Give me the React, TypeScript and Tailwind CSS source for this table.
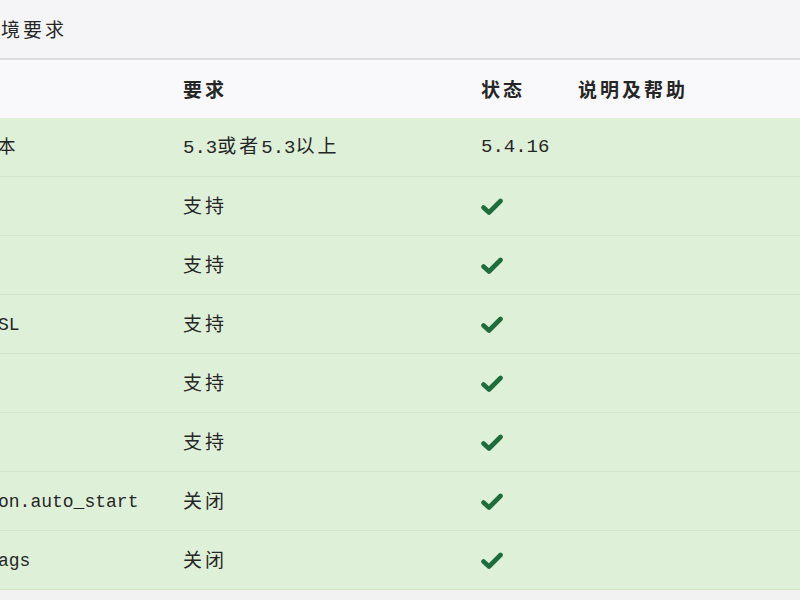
const mono = "font-['Liberation_Mono','Noto_Sans_CJK_SC',monospace]";
const cjk = "font-['Noto_Sans_CJK_SC','Liberation_Sans',sans-serif] tracking-[3px]";

type Row = { name: string; need: string; status: string | null };

const rows: Row[] = [
  { name: 'PHP版本', need: '5.3或者5.3以上', status: '5.4.16' },
  { name: 'curl', need: '支持', status: null },
  { name: 'mysql', need: '支持', status: null },
  { name: 'OpenSSL', need: '支持', status: null },
  { name: 'gd', need: '支持', status: null },
  { name: 'json', need: '支持', status: null },
  { name: 'session.auto_start', need: '关闭', status: null },
  { name: 'asp_tags', need: '关闭', status: null },
];

function Mixed({ text }: { text: string }) {
  // split ascii / cjk so each part gets its own spacing
  const parts = text.match(/[\x00-\x7f]+|[^\x00-\x7f]+/g) ?? [];
  return (
    <span className="whitespace-nowrap">
      {parts.map((p, i) =>
        /^[\x00-\x7f]+$/.test(p) ? (
          <span key={i} className={mono}>{p}</span>
        ) : (
          <span key={i} className={cjk}>{p}</span>
        )
      )}
    </span>
  );
}

function Tick() {
  return (
    <svg viewBox="0 0 22 20" className="w-[22px] h-[20px]">
      <path d="M2.5 11.5 L8 16.5 L19.5 5" fill="none" stroke="#1f6d3c" strokeWidth="4.6" strokeLinecap="round" strokeLinejoin="round" />
    </svg>
  );
}

const cols = 'grid grid-cols-[239px_298px_97px_1fr] -ml-[56px] items-center';

export default function App() {
  return (
    <div className="w-[800px] h-[600px] overflow-hidden bg-[#f1f2f1] text-[18px] text-[#262626]">
      <div className="h-[60px] bg-[#f5f5f7] border-b-2 border-[#dcdcde] flex items-center">
        <span className={`${cjk} -ml-[21px] text-[19px] tracking-[2px]`}>环境要求</span>
      </div>
      <div className={`${cols} h-[58px] bg-[#f9f9fb]`}>
        <span className={`${cjk} font-bold text-[19px]`}>项目</span>
        <span className={`${cjk} font-bold text-[19px]`}>要求</span>
        <span className={`${cjk} font-bold text-[19px]`}>状态</span>
        <span className={`${cjk} font-bold text-[19px] whitespace-nowrap`}>说明及帮助</span>
      </div>
      <div className="bg-[#dff0d9]">
        {rows.map((r) => (
          <div key={r.name} className={`${cols} h-[59px] border-b border-[#d0e5c9]`}>
            <span className="text-[18px]"><Mixed text={r.name} /></span>
            <span className="text-[19px]"><Mixed text={r.need} /></span>
            <span className="flex items-center">
              {r.status ? (
                <span className={`${mono} text-[19px]`}>{r.status}</span>
              ) : (
                <Tick />
              )}
            </span>
            <span />
          </div>
        ))}
      </div>
    </div>
  );
}
